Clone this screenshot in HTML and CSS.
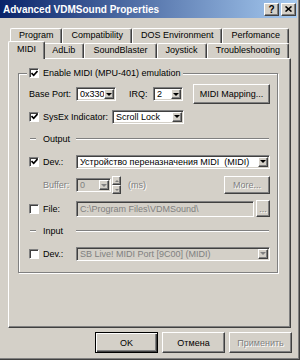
FILE: index.html
```html
<!DOCTYPE html>
<html lang="ru">
<head>
    <meta charset="UTF-8">
    <title>Advanced VDMSound Properties</title>
    <link rel="stylesheet" href="styles.css">
</head>
<body>

<div class="window">
    <!-- Заголовок окна -->
    <div class="titlebar">
        <span class="title">Advanced VDMSound Properties</span>
        <div class="caption-btns">
            <span class="cbtn">?</span>
            <span class="cbtn"><svg width="7" height="6" viewBox="0 0 7 6"><path d="M0.5 0.5 L6.5 5.5 M6.5 0.5 L0.5 5.5" stroke="#000" stroke-width="1.6" fill="none"/></svg></span>
        </div>
    </div>

    <!-- Вкладки -->
    <div class="tabs">
        <div class="tabrow">
            <div class="tab">Program</div>
            <div class="tab">Compatibility</div>
            <div class="tab">DOS Environment</div>
            <div class="tab">Perfomance</div>
        </div>
        <div class="tabrow">
            <div class="tab active">MIDI</div>
            <div class="tab">AdLib</div>
            <div class="tab">SoundBlaster</div>
            <div class="tab">Joystick</div>
            <div class="tab">Troubleshooting</div>
        </div>
    </div>

    <div class="panel">
        <fieldset class="group">
            <legend><span class="legend-in"><span class="check on"><svg width="7" height="7" viewBox="0 0 7 7"><path d="M0.5 3 L2.7 5.3 L6.5 1" stroke="#000" stroke-width="1.7" fill="none"/></svg></span>Enable MIDI (MPU-401) emulation</span></legend>

            <div class="rows">
                <div class="row h22">
                    <span class="lbl">Base Port:</span>
                    <div class="combo w40"><span class="val">0x330</span><span class="arrow"></span></div>
                    <span class="irq">IRQ:</span>
                    <div class="combo w30"><span class="val">2</span><span class="arrow"></span></div>
                    <button class="btn map">MIDI Mapping...</button>
                </div>

                <div class="row h23">
                    <span class="lbl sysex"><span class="check on"><svg width="7" height="7" viewBox="0 0 7 7"><path d="M0.5 3 L2.7 5.3 L6.5 1" stroke="#000" stroke-width="1.7" fill="none"/></svg></span>SysEx Indicator:</span>
                    <div class="combo w72"><span class="val">Scroll Lock</span><span class="arrow"></span></div>
                </div>

                <div class="row h22 sep">
                    <span class="sep-head"><span class="etch short"></span><span class="sep-text">Output</span></span>
                    <span class="etch long"></span>
                </div>

                <div class="row h23">
                    <span class="lbl"><span class="check on"><svg width="7" height="7" viewBox="0 0 7 7"><path d="M0.5 3 L2.7 5.3 L6.5 1" stroke="#000" stroke-width="1.7" fill="none"/></svg></span>Dev.:</span>
                    <div class="combo w194"><span class="val">Устройство переназначения MIDI&nbsp; (MIDI)</span><span class="arrow"></span></div>
                </div>

                <div class="row h24">
                    <span class="lbl pad dis">Buffer:</span>
                    <div class="combo w35 off"><span class="val">0</span><span class="arrow"></span></div>
                    <div class="spin">
                        <span class="spin-btn up"></span>
                        <span class="spin-btn down"></span>
                    </div>
                    <span class="ms dis">(ms)</span>
                    <button class="btn more dis">More...</button>
                </div>

                <div class="row h23">
                    <span class="lbl"><span class="check"></span>File:</span>
                    <div class="edit off"><span class="val">C:\Program Files\VDMSound\</span></div>
                    <button class="btn dots dis">...</button>
                </div>

                <div class="row h22 sep">
                    <span class="sep-head"><span class="etch short"></span><span class="sep-text">Input</span></span>
                    <span class="etch long"></span>
                </div>

                <div class="row h23">
                    <span class="lbl"><span class="check"></span>Dev.:</span>
                    <div class="combo w194 off"><span class="val">SB Live! MIDI Port [9C00] (MIDI)</span><span class="arrow"></span></div>
                </div>
            </div>
        </fieldset>
    </div>

    <!-- Кнопки диалога -->
    <div class="footer">
        <button class="btn dlg default">OK</button>
        <button class="btn dlg">Отмена</button>
        <button class="btn dlg dis">Применить</button>
    </div>
</div>

</body>
</html>
```

FILE: styles.css
```css
/* Сброс */
* {
    margin: 0;
    padding: 0;
    box-sizing: border-box;
}

body {
    font-family: "Liberation Sans", Arial, sans-serif;
    font-size: 9px;
    color: #000;
    background-color: #d4d0c8;
    width: 300px;
    height: 360px;
    overflow: hidden;
}

/* Окно */
.window {
    width: 300px;
    height: 360px;
    background-color: #d4d0c8;
    border-right: 1px solid #404040;
    border-bottom: 1px solid #404040;
    box-shadow: inset -1px -1px #808080;
}

.titlebar {
    height: 18px;
    margin-right: 2px;
    padding: 0 1px 0 3px;
    display: flex;
    align-items: center;
    justify-content: space-between;
    background: linear-gradient(to right, #0a246a, #a6caf0);
    color: #fff;
    font-size: 10px;
    font-weight: bold;
    white-space: nowrap;
}

.caption-btns {
    display: flex;
    gap: 2px;
}

.cbtn {
    width: 15px;
    height: 13px;
    display: flex;
    align-items: center;
    justify-content: center;
    background-color: #d4d0c8;
    color: #000;
    font-size: 10px;
    font-weight: bold;
    border: 1px solid;
    border-color: #fff #404040 #404040 #fff;
    box-shadow: inset -1px -1px #808080;
}

/* Вкладки */
.tabs {
    padding: 10px 0 0 10px;
}

.tabrow {
    display: flex;
    align-items: flex-end;
    width: 279px;
    height: 15px;
}

.tab {
    flex: 1 1 auto;
    height: 15px;
    padding: 0 4px;
    text-align: center;
    line-height: 13px;
    white-space: nowrap;
    background-color: #d4d0c8;
    border: 1px solid;
    border-bottom: none;
    border-color: #fff #404040 #404040 #fff;
    border-radius: 2px 2px 0 0;
    box-shadow: inset -1px 0 #808080;
}

.tab.active {
    height: 18px;
    margin: 0 -2px -1px;
    position: relative;
    z-index: 1;
    line-height: 14px;
}

/* Панель вкладки */
.panel {
    margin-left: 8px;
    width: 283px;
    height: 270px;
    padding: 8px 0 0 9px;
    border: 1px solid;
    border-color: #fff #404040 #404040 #fff;
    box-shadow: inset -1px -1px #808080;
}

.group {
    width: 260px;
    min-width: 0;
    border: 1px solid #808080;
    box-shadow: inset 1px 1px #fff, 1px 1px #fff;
}

.group legend {
    margin-left: 8px;
    padding: 0 2px;
    background-color: #d4d0c8;
}

.legend-in {
    display: flex;
    align-items: center;
    gap: 4px;
    height: 12px;
    white-space: nowrap;
}

.rows {
    padding: 4px 7px 7px 10px;
}

.row {
    display: flex;
    align-items: center;
    white-space: nowrap;
}

.h22 { height: 22px; }
.h23 { height: 23px; }
.h24 { height: 24px; }

.lbl {
    width: 47px;
    flex: none;
    display: flex;
    align-items: center;
    gap: 4px;
}

.lbl.pad {
    padding-left: 14px;
}

.lbl.sysex {
    width: 83px;
}

.irq {
    width: 24px;
    margin-left: 13px;
}

.ms {
    margin-left: 7px;
}

/* Флажки */
.check {
    width: 10px;
    height: 10px;
    flex: none;
    display: flex;
    align-items: center;
    justify-content: center;
    background-color: #fff;
    border: 1px solid;
    border-color: #808080 #fff #fff #808080;
    box-shadow: inset 1px 1px #404040;
}

.check svg {
    display: block;
}

/* Поля и списки */
.combo, .edit {
    height: 14px;
    flex: none;
    display: flex;
    padding: 1px;
    background-color: #fff;
    border: 1px solid;
    border-color: #808080 #fff #fff #808080;
    box-shadow: inset 1px 1px #404040, inset -1px -1px #d4d0c8;
}

.combo .val, .edit .val {
    flex: 1;
    overflow: hidden;
    padding-left: 2px;
    line-height: 10px;
}

.combo .arrow {
    width: 10px;
    flex: none;
    display: flex;
    align-items: center;
    justify-content: center;
    background-color: #d4d0c8;
    border: 1px solid;
    border-color: #fff #404040 #404040 #fff;
    box-shadow: inset -1px -1px #808080;
}

.combo .arrow::after {
    content: "";
    border-left: 3px solid transparent;
    border-right: 3px solid transparent;
    border-top: 3px solid #000;
}

.combo.off, .edit.off {
    background-color: #d4d0c8;
    color: #808080;
}

.combo.off .arrow::after {
    border-top-color: #808080;
}

.w30 { width: 30px; }
.w35 { width: 35px; }
.w40 { width: 40px; }
.w72 { width: 72px; }
.w194 { width: 194px; }

.edit {
    width: 178px;
    height: 16px;
}

.edit .val {
    line-height: 12px;
}

.spin {
    margin-left: 1px;
    width: 9px;
    height: 18px;
    display: flex;
    flex-direction: column;
}

.spin-btn {
    flex: 1;
    display: flex;
    align-items: center;
    justify-content: center;
    border: 1px solid;
    border-color: #fff #404040 #404040 #fff;
    box-shadow: inset -1px -1px #808080;
}

.spin-btn.up::after {
    content: "";
    border-left: 2px solid transparent;
    border-right: 2px solid transparent;
    border-bottom: 2px solid #808080;
}

.spin-btn.down::after {
    content: "";
    border-left: 2px solid transparent;
    border-right: 2px solid transparent;
    border-top: 2px solid #808080;
}

/* Разделители */
.sep-head {
    width: 47px;
    flex: none;
    display: flex;
    align-items: center;
}

.etch {
    height: 2px;
    border-top: 1px solid #808080;
    border-bottom: 1px solid #fff;
}

.etch.short {
    width: 6px;
    margin-left: 1px;
}

.sep-text {
    margin-left: 7px;
}

.etch.long {
    width: 193px;
}

/* Кнопки */
.btn {
    font: inherit;
    color: #000;
    flex: none;
    display: flex;
    align-items: center;
    justify-content: center;
    background-color: #d4d0c8;
    border: 1px solid;
    border-color: #fff #404040 #404040 #fff;
    box-shadow: inset -1px -1px #808080;
    white-space: nowrap;
}

.btn.map {
    width: 77px;
    height: 20px;
    margin-left: 10px;
}

.btn.more {
    width: 46px;
    height: 18px;
    margin-left: auto;
}

.btn.dots {
    width: 14px;
    height: 17px;
    margin-left: auto;
}

.dis {
    color: #808080;
    text-shadow: 1px 1px 0 #fff;
}

.footer {
    display: flex;
    justify-content: flex-end;
    gap: 4px;
    padding: 4px 7px 0 0;
}

.btn.dlg {
    width: 63px;
    height: 21px;
}

.btn.default {
    border-color: #000;
    box-shadow: inset 1px 1px #fff, inset -1px -1px #404040, inset -2px -2px #808080;
}
```
